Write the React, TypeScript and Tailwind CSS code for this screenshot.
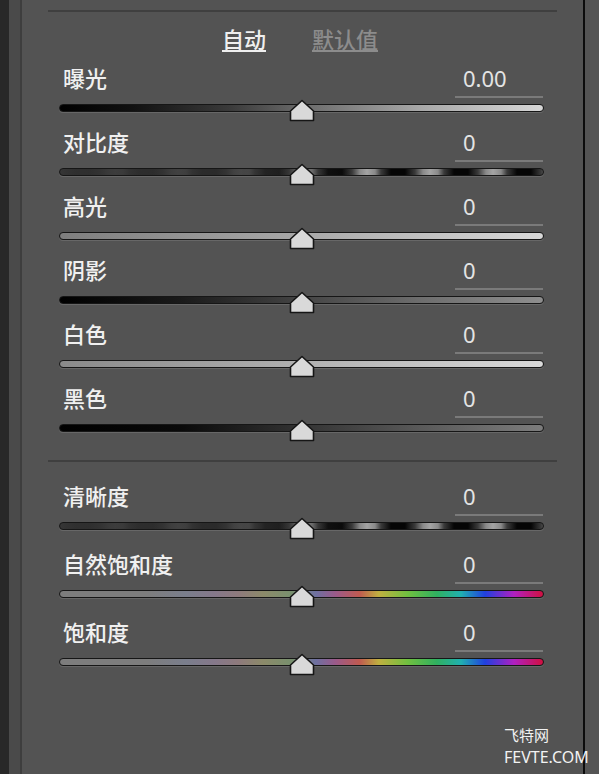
const cjk = "font-['Noto_Sans_CJK_SC','Noto_Sans',sans-serif]";

type Slider = {
  label: string;
  value: string;
  track: string;
};

const bands =
  "bg-[image:linear-gradient(90deg,rgba(50,50,50,0.95)_0%,rgba(50,50,50,0.82)_38%,rgba(50,50,50,0.35)_52%,rgba(50,50,50,0)_62%),repeating-linear-gradient(90deg,#8a8a8a_0px,#3a3a3a_6px,#050505_16px,#050505_30px,#3a3a3a_40px,#8a8a8a_48px,#a4a4a4_55px,#8a8a8a_63px)]";

const toneSliders: Slider[] = [
  {
    label: "曝光",
    value: "0.00",
    track:
      "bg-[linear-gradient(90deg,#000_0%,#111_15%,#3a3a3a_35%,#6a6a6a_50%,#a8a8a8_75%,#d6d6d6_100%)]",
  },
  { label: "对比度", value: "0", track: bands },
  {
    label: "高光",
    value: "0",
    track: "bg-[linear-gradient(90deg,#7e7e7e_0%,#a8a8a8_50%,#d8d8d8_100%)]",
  },
  {
    label: "阴影",
    value: "0",
    track:
      "bg-[linear-gradient(90deg,#000_0%,#1a1a1a_25%,#444_50%,#6e6e6e_75%,#8e8e8e_100%)]",
  },
  {
    label: "白色",
    value: "0",
    track: "bg-[linear-gradient(90deg,#8a8a8a_0%,#b0b0b0_50%,#dadada_100%)]",
  },
  {
    label: "黑色",
    value: "0",
    track:
      "bg-[linear-gradient(90deg,#000_0%,#0a0a0a_25%,#333_50%,#5a5a5a_75%,#7c7c7c_100%)]",
  },
];

const rainbow =
  "bg-[linear-gradient(90deg,#7d7d7d_0%,#7d7d7d_18%,#7a7e8c_26%,#85788a_32%,#8e7a7c_37%,#8c8a6a_42%,#78906e_48%,#6e70a0_53%,#9a5a8a_57%,#c05a50_62%,#c0b040_66%,#70c040_72%,#30b060_78%,#20b0b0_83%,#2040e0_88%,#b020c0_94%,#d01040_100%)]";

const presenceSliders: Slider[] = [
  { label: "清晰度", value: "0", track: bands },
  { label: "自然饱和度", value: "0", track: rainbow },
  { label: "饱和度", value: "0", track: rainbow },
];

function Thumb() {
  return (
    <svg
      width="26"
      height="23"
      viewBox="0 0 26 23"
      className="absolute left-1/2 top-[-5px] -translate-x-1/2"
    >
      <polygon
        points="13,1.5 24.5,12 24.5,21.5 1.5,21.5 1.5,12"
        fill="#d9d9d9"
        stroke="#161616"
        strokeWidth="1.6"
        strokeLinejoin="round"
      />
    </svg>
  );
}

function SliderRow({ item, tall }: { item: Slider; tall?: boolean }) {
  return (
    <div className={`${tall ? "h-[68px]" : "h-[64px]"} pl-[37px] pr-[39px]`}>
      <div className="flex items-start justify-between">
        <span className={`${cjk} pl-[4px] text-[22px] font-medium leading-[30px] text-[#f0f0f0]`}>
          {item.label}
        </span>
        <div className="mr-[1px] h-[36px] w-[88px] border-b-2 border-[#7a7a7a] pl-[8px] font-['Noto_Sans',sans-serif] text-[22px] leading-[32px] text-[#e4e4e4]">
          {item.value}
        </div>
      </div>
      <div className="relative mt-[6px] h-[8px]">
        <div
          className={`h-[8px] rounded-[4px] border border-[#161616] shadow-[0_1px_0_rgba(255,255,255,0.12)] ${item.track}`}
        />
        <Thumb />
      </div>
    </div>
  );
}

export default function App() {
  return (
    <div className="relative flex h-[774px] w-[599px] overflow-hidden bg-[#535353]">
      <div className="w-[9px] bg-[#282828]" />
      <div className="w-[11px] bg-[#4a4a4a]" />
      <div className="w-[2px] bg-[#3e3e3e]" />

      <main className="flex w-[561px] flex-col">
        <div className="mx-[26px] mt-[10px] h-[2px] bg-[#3f3f3f]" />

        <div className={`${cjk} mt-[14px] flex gap-[46px] pl-[200px] text-[22px] font-medium`}>
          <span className="border-b-2 border-[#efefef] leading-[24px] text-[#efefef]">
            自动
          </span>
          <span className="border-b-2 border-[#8c8c8c] leading-[24px] text-[#8c8c8c]">
            默认值
          </span>
        </div>

        <div className="mt-[10px]">
          {toneSliders.map((s) => (
            <SliderRow key={s.label} item={s} />
          ))}
        </div>

        <div className="mx-[26px] mt-[14px] h-[2px] bg-[#3f3f3f]" />

        <div className="mt-[18px]">
          {presenceSliders.map((s) => (
            <SliderRow key={s.label} item={s} tall />
          ))}
        </div>
      </main>

      <div className="w-[2px] bg-[#0c0c0c]" />
      <div className="flex-1 bg-[#545454]" />

      <div className="absolute left-[504px] top-[724px] text-[#f2f2f2]">
        <div className={`${cjk} text-[15px] leading-[22px]`}>飞特网</div>
        <div className="font-['Noto_Sans',sans-serif] text-[16px] leading-[22px]">FEVTE.COM</div>
      </div>
    </div>
  );
}
